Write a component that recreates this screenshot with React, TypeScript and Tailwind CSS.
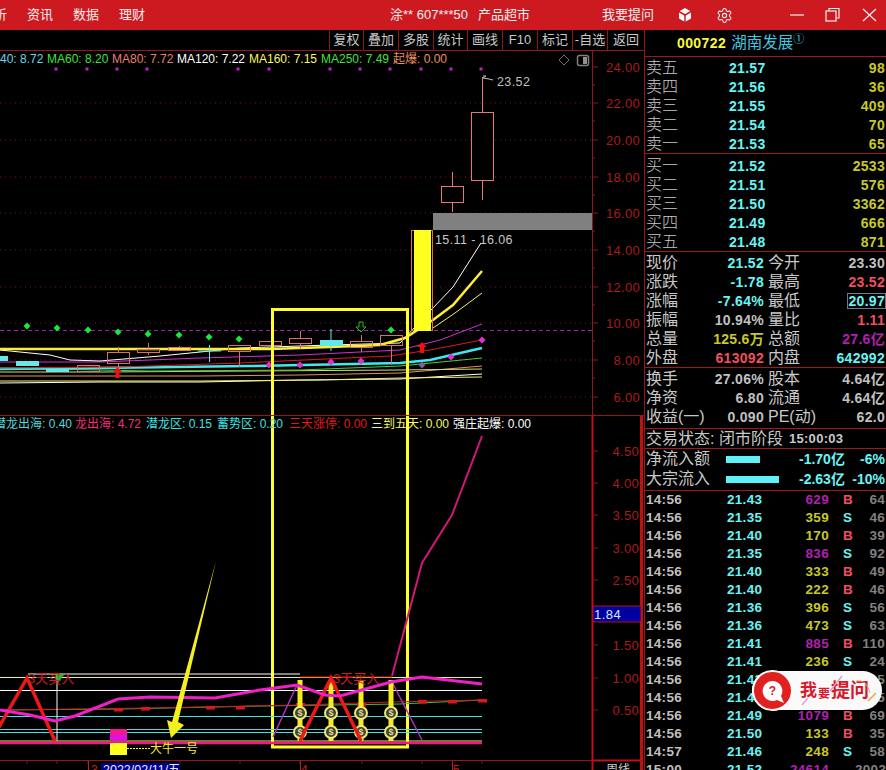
import { Box, Settings } from "lucide-react";

const ui = "font-['Liberation_Sans','Noto_Sans_CJK_SC',sans-serif]";

const toolButtons = [
  { label: "复权", w: "w-[34px]" },
  { label: "叠加", w: "w-[35px]" },
  { label: "多股", w: "w-[35px]" },
  { label: "统计", w: "w-[34px]" },
  { label: "画线", w: "w-[35px]" },
  { label: "F10", w: "w-[35px]" },
  { label: "标记", w: "w-[35px]" },
  { label: "-自选", w: "w-[35px]" },
  { label: "返回", w: "w-[37px]" },
];

const sells = [
  ["卖五", "21.57", "98"],
  ["卖四", "21.56", "36"],
  ["卖三", "21.55", "409"],
  ["卖二", "21.54", "70"],
  ["卖一", "21.53", "65"],
];
const buys = [
  ["买一", "21.52", "2533"],
  ["买二", "21.51", "576"],
  ["买三", "21.50", "3362"],
  ["买四", "21.49", "666"],
  ["买五", "21.48", "871"],
];

const CY = "text-[#66f5f5]";
const GR = "text-[#c0c0c0]";
const RD = "text-[#f05060]";
const YE = "text-[#c8c828]";
const MG = "text-[#b020b0]";

const quotes = [
  ["现价", "21.52", CY, "今开", "23.30", GR],
  ["涨跌", "-1.78", CY, "最高", "23.52", RD],
  ["涨幅", "-7.64%", CY, "最低", "20.97", CY],
  ["振幅", "10.94%", GR, "量比", "1.11", RD],
  ["总量", "125.6万", YE, "总额", "27.6亿", MG],
  ["外盘", "613092", RD, "内盘", "642992", CY],
];
const quotes2 = [
  ["换手", "27.06%", GR, "股本", "4.64亿", GR],
  ["净资", "6.80", GR, "流通", "4.64亿", GR],
  ["收益(一)", "0.090", GR, "PE(动)", "62.0", GR],
];

const ticks = [
  ["14:56", "21.43", "629", "B", "64"],
  ["14:56", "21.35", "359", "S", "46"],
  ["14:56", "21.40", "170", "B", "39"],
  ["14:56", "21.35", "836", "S", "92"],
  ["14:56", "21.40", "333", "B", "49"],
  ["14:56", "21.40", "222", "B", "46"],
  ["14:56", "21.36", "396", "S", "56"],
  ["14:56", "21.36", "473", "S", "63"],
  ["14:56", "21.41", "885", "B", "110"],
  ["14:56", "21.41", "236", "S", "24"],
  ["14:56", "21.42", "312", "S", "35"],
  ["14:56", "21.42", "287", "B", "45"],
  ["14:56", "21.49", "1079", "B", "69"],
  ["14:56", "21.50", "133", "B", "35"],
  ["14:57", "21.46", "248", "S", "58"],
  ["15:00", "21.52", "24614", "", "2003"],
];

// candles from the upper chart: x, top, bottom, wick top, wick bottom
const candles = [
  [77, 365, 371, 365, 371],
  [107, 352, 363, 347, 367],
  [137, 349, 352, 343, 355],
  [168, 347, 350, 346, 350],
  [228, 345, 351, 345, 367],
  [259, 341, 345, 341, 345],
  [289, 338, 343, 331, 349],
  [350, 341, 347, 335, 352],
  [380, 335, 345, 335, 365],
];
const cyanCandles = [
  [-15, 356, 361],
  [16, 361, 366],
  [46, 369, 372],
  [320, 340, 346],
];
const purpleDots = [56, 87, 117, 147, 238, 269, 330, 360, 390, 421, 451, 481];
const greenDots = [
  [27, 326],
  [57, 328],
  [88, 330],
  [118, 332],
  [148, 334],
  [179, 335],
  [209, 337],
  [239, 339],
  [391, 330],
];
const pinkDots = [
  [269, 365],
  [300, 365],
  [331, 362],
  [361, 361],
  [451, 357],
  [482, 340],
];

const upperPrices = [
  ["24.00", 67],
  ["22.00", 103],
  ["20.00", 140],
  ["18.00", 177],
  ["16.00", 213],
  ["14.00", 250],
  ["12.00", 287],
  ["10.00", 323],
  ["8.00", 360],
  ["6.00", 397],
] as const;
const lowerPrices = [
  ["4.50", 451],
  ["4.00", 483],
  ["3.50", 515],
  ["3.00", 548],
  ["2.50", 580],
  ["1.50", 645],
  ["1.00", 678],
  ["0.50", 710],
] as const;

function MoneyBag({ x, y }: { x: number; y: number }) {
  return (
    <g>
      <circle cx={x} cy={y} r="6" fill="#3c4a30" stroke="#f0e878" strokeWidth="2" />
      <text x={x} y={y + 3} textAnchor="middle" fontSize="9" fontWeight="700" fill="#f0d0a0">
        $
      </text>
    </g>
  );
}

function UpperChart() {
  return (
    <svg width="644" height="364" viewBox="0 51 644 364" className={`block ${ui}`}>
      {/* price grid */}
      {upperPrices.slice(1).map(([, y]) => (
        <line key={y} x1="0" x2="592" y1={y} y2={y} stroke="#701818" strokeDasharray="1 4" />
      ))}
      <line x1="0" x2="592" y1="330.5" y2="330.5" stroke="#a020a0" strokeDasharray="4 3" />
      {purpleDots.map((x) => (
        <rect key={x} x={x - 1.5} y="67.5" width="3" height="3" fill="#c020c0" />
      ))}

      {/* moving averages */}
      <g fill="none">
        <polyline points="0,383 100,382 200,382 300,380 400,379 482,374" stroke="#ffffff" />
        <polyline points="0,381 200,381 320,380 400,378 482,377" stroke="#f4f060" />
        <polyline points="0,376 120,376 200,376 300,375 400,373 482,366" stroke="#e0906a" />
        <polyline points="0,372 100,372 250,371 400,370 482,369" stroke="#d8e068" />
        <polyline points="0,368 150,371 300,370 400,366 482,358" stroke="#40d040" />
        <polyline points="0,369 100,368 250,366 400,363 430,360 482,348" stroke="#40e8f0" strokeWidth="2.5" />
        <polyline points="0,368 120,367 240,363 390,356 430,350 482,340" stroke="#e01818" />
        <polyline points="0,362 100,362 200,358 300,355 400,350 440,340 482,324" stroke="#d030d0" />
        <polyline points="0,350 50,355 70,360 100,361 160,356 240,348 330,345 400,343 431,310 453,287 481,243" stroke="#ffffff" />
        <polyline points="433,328 455,313 482,293" stroke="#f4f060" />
        <polyline points="0,349 100,349 200,349 270,349 330,347 380,345 405,338 433,320 453,305 482,271" stroke="#ffee30" strokeWidth="2.5" />
      </g>

      {/* candles */}
      {candles.map(([x, top, bottom, wt, wb]) => (
        <g key={x} stroke="#d87070" fill="none">
          <line x1={x + 11.5} x2={x + 11.5} y1={wt} y2={top} />
          <line x1={x + 11.5} x2={x + 11.5} y1={bottom} y2={wb} />
          <rect x={x + 0.5} y={top + 0.5} width="22" height={bottom - top} />
        </g>
      ))}
      {cyanCandles.map(([x, top, bottom]) => (
        <rect key={x} x={x} y={top} width="23" height={bottom - top} fill="#66e8e8" />
      ))}
      <line x1="331" x2="331" y1="329" y2="351" stroke="#66e8e8" />
      <line x1="209.5" x2="209.5" y1="345" y2="362" stroke="#66e8e8" />
      <line x1="198" x2="221" y1="351" y2="351" stroke="#66e8e8" />
      <rect x="411.5" y="230.5" width="21" height="100" fill="none" stroke="#d87070" />
      <rect x="414" y="230" width="17" height="101" fill="#ffff20" />
      <g stroke="#e87878" fill="none">
        <line x1="452.5" x2="452.5" y1="172" y2="212" />
        <rect x="441.5" y="186.5" width="22" height="16" fill="#000" />
        <line x1="482.5" x2="482.5" y1="77" y2="200" />
        <rect x="471.5" y="112.5" width="22" height="68" fill="#000" />
      </g>
      <rect x="433" y="213" width="159" height="17" fill="#808080" />

      {/* signals */}
      {greenDots.map(([x, y]) => (
        <path key={x} d={`M${x} ${y - 3.5} L${x + 3.5} ${y} L${x} ${y + 3.5} L${x - 3.5} ${y} Z`} fill="#18e838" />
      ))}
      {pinkDots.map(([x, y]) => (
        <path key={x} d={`M${x} ${y - 3.5} L${x + 3.5} ${y} L${x} ${y + 3.5} L${x - 3.5} ${y} Z`} fill="#e030d0" />
      ))}
      <path d="M422 361.5 L425.5 365 L422 368.5 L418.5 365 Z" fill="#806090" />
      <path d="M117.5 367 L122 372 L119.5 372 L119.5 378 L115.5 378 L115.5 372 L113 372 Z" fill="#f01010" />
      <path d="M422 342 L427 347 L424 347 L424 353 L420 353 L420 347 L417 347 Z" fill="#f01010" />
      <path d="M359 322 L363 322 L363 327 L366 327 L361 332 L356 327 L359 327 Z" fill="none" stroke="#20c020" />

      {/* labels */}
      <polyline points="483,76 486,76 483,78 489,79 493,80" fill="none" stroke="#c0c0c0" />
      <text x="497" y="86" fontSize="12.5" fill="#c0c0c0" letterSpacing="0.4">23.52</text>
      <text x="435" y="244" fontSize="12.5" fill="#c8c8c8" letterSpacing="0.4">15.11 - 16.06</text>
      <path d="M564 55 L569 60 L564 65 L559 60 Z" fill="none" stroke="#707070" />
      <rect x="577.5" y="55.5" width="11" height="10" rx="2" fill="none" stroke="#808080" strokeWidth="1.5" />
      <rect x="583" y="57" width="4" height="7" fill="#909090" />

      {/* the annotation box */}
      <path d="M272.5 420 V309.5 H407.5 V420" fill="none" stroke="#ffff30" strokeWidth="3" />

      {/* right axis */}
      <line x1="592.5" x2="592.5" y1="51" y2="416" stroke="#901818" />
      {upperPrices.map(([label, y]) => (
        <g key={label}>
          <line x1="592" x2="598" y1={y} y2={y} stroke="#901818" />
          <line x1="592" x2="595" y1={y + 18} y2={y + 18} stroke="#901818" />
          <text x="640" y={y + 5} textAnchor="end" fontSize="13" fill="#a81c1c" letterSpacing="0.3">
            {label}
          </text>
        </g>
      ))}
    </svg>
  );
}

function LowerChart() {
  return (
    <svg width="644" height="354" viewBox="0 416 644 354" className={`block ${ui}`}>
      <path d="M272.5 410 V747 H407.5 V410" fill="none" stroke="#ffff30" strokeWidth="3" />

      <g fill="none">
        <line x1="28" x2="300" y1="674" y2="674" stroke="#ffffff" />
        <line x1="0" x2="482" y1="677.5" y2="677.5" stroke="#f4f060" />
        <line x1="300" x2="392" y1="677" y2="677" stroke="#e02020" />
        <line x1="0" x2="482" y1="690.5" y2="690.5" stroke="#ffffff" />
        <polyline points="0,710 120,709 260,706 400,704 482,700" stroke="#40c040" />
        <polyline points="0,710 150,708 300,705 392,702 482,700" stroke="#d01818" />
        <line x1="0" x2="482" y1="716.5" y2="716.5" stroke="#40e0e0" />
        <line x1="0" x2="482" y1="729.5" y2="729.5" stroke="#40e0e0" />
        <line x1="0" x2="482" y1="732.5" y2="732.5" stroke="#40e0e0" />
        <line x1="57" x2="57" y1="674" y2="741" stroke="#ffffff" />
        <line x1="0" x2="482" y1="741" y2="741" stroke="#f4f060" />
        <line x1="0" x2="482" y1="743" y2="743" stroke="#f01888" strokeWidth="2.5" />
        <polyline points="273,737 297,685" stroke="#b030c0" strokeWidth="1.5" />
        <polyline points="391,680 422,740" stroke="#b030c0" strokeWidth="1.5" />
        <polyline points="392,676 422,563 452,515 482,436" stroke="#d01878" strokeWidth="2" />
      </g>
      {[[118, 710], [145, 709], [210, 708], [240, 708], [300, 705], [361, 705], [422, 702], [452, 702], [482, 701]].map(([x, y]) => (
        <rect key={x} x={x - 4} y={y - 2} width="9" height="3.5" fill="#d81818" />
      ))}

      {/* money bag columns */}
      {[300, 331, 361, 391].map((x) => (
        <g key={x}>
          <rect x={x - 2.5} y="680" width="5" height="61" fill="#f4ec20" />
          <MoneyBag x={x} y={713} />
          <MoneyBag x={x} y={732} />
        </g>
      ))}

      <polyline points="-9,741 27,678 55,741" fill="none" stroke="#ee1818" strokeWidth="3.5" />
      <polyline points="300,741 331,678 361,741" fill="none" stroke="#ee1818" strokeWidth="3.5" />
      <polyline
        points="0,710 30,715 55,721 75,716 118,699 150,697 215,698 260,690 297,685 325,695 340,696 391,682 422,677 482,684"
        fill="none"
        stroke="#f020c8"
        strokeWidth="3"
      />
      <path d="M55 673 L64 675 L58 683 Z" fill="#30b030" />
      <text x="28" y="683" fontSize="13" fill="#d02020">3天买入</text>
      <text x="333" y="683" fontSize="13" fill="#d02020">3天买入</text>

      <rect x="110" y="729" width="17" height="6" fill="#f01890" />
      <rect x="110" y="735" width="17" height="6" fill="#e010e0" />
      <rect x="110" y="743" width="17" height="12" fill="#ffff20" />
      <line x1="127" x2="150" y1="748.5" y2="748.5" stroke="#ffff20" strokeDasharray="2 1" />
      <text x="150" y="753" fontSize="12" fill="#f4f020">大牛一号</text>

      <polygon points="216,561 178,722 184,725 171,738 167,720 172,722" fill="#f4f020" />

      {/* time axis */}
      <line x1="0" x2="592" y1="760.5" y2="760.5" stroke="#901818" />
      <line x1="592" x2="641" y1="760.5" y2="760.5" stroke="#c01010" strokeWidth="2" />
      {[27, 57, 88, 118, 180, 240, 300, 362, 422, 482].map((x) => (
        <line key={x} x1={x} x2={x} y1="761" y2="764" stroke="#901818" />
      ))}
      {[
        ["3", 91],
        ["4", 301],
        ["5", 453],
      ].map(([t, x]) => (
        <text key={t} x={x} y="774" fontSize="12" fill="#c02020">
          {t}
        </text>
      ))}
      <line x1="88.5" x2="88.5" y1="761" y2="770" stroke="#c02020" />
      <line x1="300.5" x2="300.5" y1="761" y2="770" stroke="#c02020" />
      <line x1="452.5" x2="452.5" y1="761" y2="770" stroke="#c02020" />
      <rect x="101" y="763" width="79" height="7" fill="#000090" />
      <text x="103" y="774" fontSize="12.5" fill="#e8e8ff">2022/02/11/五</text>
      <text x="606" y="774" fontSize="12" fill="#d0d0d0">周线</text>

      {/* right axis */}
      <line x1="592.5" x2="592.5" y1="416" y2="770" stroke="#c01010" strokeWidth="2" />
      <line x1="641.5" x2="641.5" y1="416" y2="770" stroke="#c01010" strokeWidth="3" />
      {lowerPrices.map(([label, y]) => (
        <g key={label}>
          <line x1="592" x2="598" y1={y} y2={y} stroke="#901818" />
          <text x="639" y={y + 5} textAnchor="end" fontSize="13" fill="#a81c1c" letterSpacing="0.3">
            {label}
          </text>
        </g>
      ))}
      <rect x="593" y="606" width="48" height="16" fill="#0000a0" stroke="#c01010" />
      <text x="594" y="619" fontSize="13" fill="#d8e8ff" letterSpacing="0.5">1.84</text>
    </svg>
  );
}

function AskBadge() {
  return (
    <div className="absolute left-[752px] top-[671px] flex h-[39px] w-[130px] items-center rounded-full bg-[#fafafa]">
      <div className="absolute left-0 top-[-1px] flex h-[41px] w-[41px] items-center justify-center rounded-full border-2 border-white bg-[#e0211f]">
        <svg width="26" height="26" viewBox="0 0 26 26">
          <path d="M13 3 A10 10 0 1 0 17 22 L24 25 L21 18 A10 10 0 0 0 13 3 Z" fill="#fff" />
          <text x="12.5" y="17" textAnchor="middle" fontSize="12" fontWeight="700" fill="#d02030">?</text>
        </svg>
      </div>
      <div className="ml-[48px] flex items-center whitespace-nowrap font-bold text-[#d8182c]">
        <span className="text-[17px] leading-none">我</span>
        <span className="ml-[1px] mr-[1px] mt-[6px] text-[12px] leading-none">要</span>
        <span className="text-[19px] leading-none">提问</span>
      </div>
      <svg className="absolute inset-0" width="130" height="39" viewBox="0 0 130 39">
        <line x1="78" y1="20" x2="90" y2="5" stroke="#e8a0c0" strokeWidth="1.5" />
        <line x1="50" y1="34" x2="56" y2="27" stroke="#e0a0e0" strokeWidth="1.5" />
        <line x1="116" y1="30" x2="124" y2="22" stroke="#f0a040" strokeWidth="1.5" />
        <path d="M104 10 Q115 8 118 22" fill="none" stroke="#f0a868" />
      </svg>
    </div>
  );
}

function Level({ rows }: { rows: string[][] }) {
  return (
    <div className="border-b border-[#a01818]">
      {rows.map(([label, price, vol]) => (
        <div key={label} className="grid h-[19px] grid-cols-[83px_1fr_auto] items-center pl-[1px] pr-[1px] leading-none">
          <span className="text-[16px] font-light text-[#c8c8c8]">{label}</span>
          <span className={`text-[14px] font-bold tracking-[0.3px] ${CY}`}>{price}</span>
          <span className="text-[14px] font-bold tracking-[0.3px] text-[#c8c828]">{vol}</span>
        </div>
      ))}
    </div>
  );
}

function QuoteRows({ rows, className }: { rows: string[][]; className: string }) {
  return (
    <div className={`border-b border-[#a01818] ${className}`}>
      {rows.map(([a, av, ac, b, bv, bc]) => (
        <div key={a} className="flex h-[19px] items-center pl-[1px] pr-[1px] leading-none">
          <span className="w-[40px] whitespace-nowrap text-[16px] text-[#c8c8c8]">{a}</span>
          <span className={`w-[78px] whitespace-nowrap text-right text-[14px] font-bold tracking-[0.3px] ${ac}`}>{av}</span>
          <span className="ml-[4px] w-[50px] whitespace-nowrap text-[16px] text-[#c8c8c8]">{b}</span>
          <span className="flex-1 text-right">
            <span
              className={`inline-block whitespace-nowrap text-[14px] font-bold tracking-[0.3px] ${bc} ${
                a === "涨幅" ? "outline outline-1 outline-[#707890]" : ""
              }`}
            >
              {bv}
            </span>
          </span>
        </div>
      ))}
    </div>
  );
}

export default function App() {
  return (
    <div className={`relative flex h-[770px] w-[886px] flex-col overflow-hidden bg-black ${ui}`}>
      {/* title bar */}
      <header className="flex h-[30px] shrink-0 items-center bg-[#cc1a20] text-[13px] text-[#f4f0f0]">
        <span className="ml-[-6px] w-[33px]">析</span>
        <span className="w-[46px]">资讯</span>
        <span className="w-[46px]">数据</span>
        <span className="w-[271px]">理财</span>
        <span className="w-[88px] whitespace-nowrap">涂** 607***50</span>
        <span className="w-[124px]">产品超市</span>
        <span className="w-[74px] whitespace-nowrap">我要提问</span>
        <Box size={18} className="mr-[22px] fill-white" stroke="#cc1a20" />
        <Settings size={17} strokeWidth={1.5} className="mr-[57px]" />
        <svg width="96" height="16" viewBox="0 0 96 16" fill="none" stroke="#f4f0f0" strokeWidth="1.2">
          <line x1="0" y1="8" x2="14" y2="8" />
          <rect x="36" y="4" width="10" height="10" />
          <path d="M39 4 V1.5 H49 V11 H46" />
          <path d="M73 2 L86 14 M86 2 L73 14" />
        </svg>
      </header>

      <div className="flex min-h-0 flex-1">
        {/* chart column */}
        <main className="w-[644px] shrink-0">
          <div className="flex h-[21px] justify-end border-b border-[#901818]">
            {toolButtons.map((b) => (
              <span
                key={b.label}
                className={`flex h-[20px] items-center justify-center border-l border-[#901818] text-[13px] text-[#c8c8c8] ${b.w}`}
              >
                {b.label}
              </span>
            ))}
          </div>

          <div className="relative">
            <div className="absolute left-0 top-0 flex whitespace-nowrap text-[12px] leading-[16px]">
              <span className="w-[47px] text-[#66d8e8]">40: 8.72</span>
              <span className="w-[65px] text-[#40e040]">MA60: 8.20</span>
              <span className="w-[65px] text-[#e88070]">MA80: 7.72</span>
              <span className="w-[72px] text-white">MA120: 7.22</span>
              <span className="w-[72px] text-[#f8f860]">MA160: 7.15</span>
              <span className="w-[72px] text-[#40e040]">MA250: 7.49</span>
              <span className="text-[#e89060]">起爆: 0.00</span>
            </div>
            <UpperChart />
          </div>

          <div className="relative border-t border-[#901818]">
            <div className="absolute left-[-6px] top-0 flex whitespace-nowrap text-[12px] leading-[16px]">
              <span className="w-[81px] text-[#50d8d8]">潜龙出海: 0.40</span>
              <span className="w-[71px] text-[#f0307a]">龙出海: 4.72</span>
              <span className="w-[71px] text-[#40e0e0]">潜龙区: 0.15</span>
              <span className="w-[72px] text-[#40e0e0]">蓄势区: 0.20</span>
              <span className="w-[82px] text-[#e01818]">三天涨停: 0.00</span>
              <span className="w-[82px] text-[#f8f860]">三到五天: 0.00</span>
              <span className="text-white">强庄起爆: 0.00</span>
            </div>
            <LowerChart />
          </div>
        </main>

        {/* quote column */}
        <aside className="w-[242px] shrink-0 border-l border-[#901818]">
          <div className="flex h-[27px] items-center border-b border-[#a01818] pl-[32px]">
            <span className="text-[14px] font-bold tracking-[0.4px] text-[#f8f840]">000722</span>
            <span className="ml-[5px] text-[15.5px] text-[#40c8e0]">湖南发展</span>
            <span className="mb-[8px] text-[11px] leading-none text-[#40c8e0]">①</span>
          </div>
          <div className="pt-[1px]">
            <Level rows={sells} />
          </div>
          <div className="pt-[2px]">
            <Level rows={buys} />
          </div>
          <QuoteRows rows={quotes} className="pt-[1px]" />
          <QuoteRows rows={quotes2} className="pb-[2px] pt-[1px]" />
          <div className="flex h-[20px] items-center whitespace-nowrap border-b border-[#a01818] pl-[1px] text-[16px] leading-none text-[#c8c8c8]">
            交易状态: 闭市阶段
            <span className="ml-[6px] text-[13px] font-bold tracking-[0.3px]">15:00:03</span>
          </div>
          <div className="border-b border-[#a01818] pb-[1px]">
            {[
              ["净流入额", "w-[34px]", "-1.70亿", "-6%"],
              ["大宗流入", "w-[53px]", "-2.63亿", "-10%"],
            ].map(([label, bar, amount, pct]) => (
              <div key={label} className="flex h-[20px] items-center pl-[1px] pr-[1px] leading-none">
                <span className="w-[80px] whitespace-nowrap text-[16px] text-[#c8c8c8]">{label}</span>
                <span className="w-[73px]">
                  <span className={`block h-[7px] bg-[#60f0f8] ${bar}`} />
                </span>
                <span className={`w-[47px] whitespace-nowrap text-[14px] font-bold ${CY}`}>{amount}</span>
                <span className={`flex-1 text-right text-[14px] font-bold ${CY}`}>{pct}</span>
              </div>
            ))}
          </div>
          {ticks.map(([time, price, vol, side, count], i) => (
            <div
              key={i}
              className="grid h-[18px] grid-cols-[81px_104px_24px_1fr] items-center pl-[1px] pr-[1px] text-[13.5px] font-bold leading-none tracking-[0.3px]"
            >
              <span className="text-[#c0c0c0]">{time}</span>
              <span className="flex justify-between pr-[2px]">
                <span className={CY}>{price}</span>
                <span className={Number(vol) >= 500 ? MG : YE}>{vol}</span>
              </span>
              <span className={`pl-[12px] ${side === "B" ? RD : CY}`}>{side}</span>
              <span className="text-right text-[#808080]">{count}</span>
            </div>
          ))}
        </aside>
      </div>

      <AskBadge />
    </div>
  );
}
